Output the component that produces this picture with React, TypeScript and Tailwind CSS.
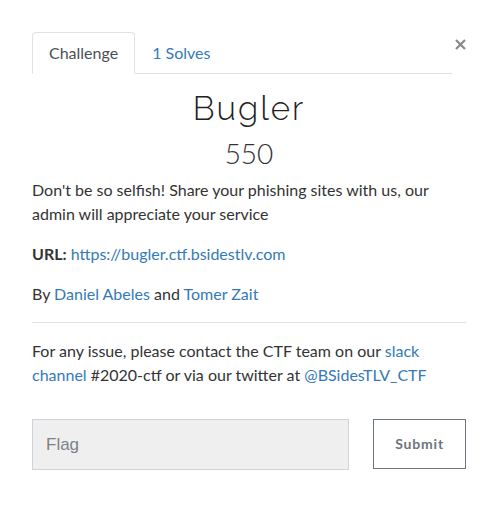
import React from "react";

export default function App() {
  return (
    <div className="w-[496px] h-[517px] bg-white pl-8 pr-[30px] pt-8 font-['Lato','Noto_Sans',sans-serif] text-[16px] leading-6 text-[#333]">
      <div className="flex items-start">
        <ul className="flex flex-1 border-b border-[#dee2e6]">
          <li className="-mb-px rounded-t border border-[#dee2e6] border-b-white bg-white px-4 py-2 text-[#495057]">
            Challenge
          </li>
          <li className="-mb-px border border-transparent px-4 py-2 text-[#337ab7]">1 Solves</li>
        </ul>
        <button className="flex w-[14px] justify-end pt-[7px] text-[#888]">
          <svg width="11" height="11" viewBox="0 0 11 11">
            <path d="M1 1L10 10M10 1L1 10" stroke="currentColor" strokeWidth="2.2" />
          </svg>
        </button>
      </div>
      <h2 className="mt-4 mb-2 text-center font-['Raleway','Lato',sans-serif] text-[33px] font-light leading-[38px] tracking-[2px] text-[#222]">
        Bugler
      </h2>
      <h4 className="mb-2 text-center text-[28px] font-light leading-[34px] text-[#333]">550</h4>
      <p className="mb-4">
        Don't be so selfish! Share your phishing sites with us, our admin will appreciate your service
      </p>
      <p className="mb-4">
        <strong className="font-bold">URL:</strong>{" "}
        <a className="text-[#337ab7]">https://bugler.ctf.bsidestlv.com</a>
      </p>
      <p className="mb-4">
        By <a className="text-[#337ab7]">Daniel Abeles</a> and <a className="text-[#337ab7]">Tomer Zait</a>
      </p>
      <hr className="mb-4 border-t border-[#e3e3e3]" />
      <p className="mb-8">
        For any issue, please contact the CTF team on our <a className="text-[#337ab7]">slack channel</a> #2020-ctf or via our twitter at{" "}
        <a className="text-[#337ab7]">@BSidesTLV_CTF</a>
      </p>
      <div className="flex gap-6">
        <input
          className="h-[51px] w-[318px] border border-[#ced4da] bg-[#efefef] px-[13px] font-['Liberation_Sans',Arial,sans-serif] text-[17px] outline-none placeholder:text-[#7d8287]"
          placeholder="Flag"
        />
        <button className="h-[50px] w-[93px] border border-[#6c757d] bg-white text-[14px] font-bold tracking-[0.8px] text-[#6c757d]">
          Submit
        </button>
      </div>
    </div>
  );
}
